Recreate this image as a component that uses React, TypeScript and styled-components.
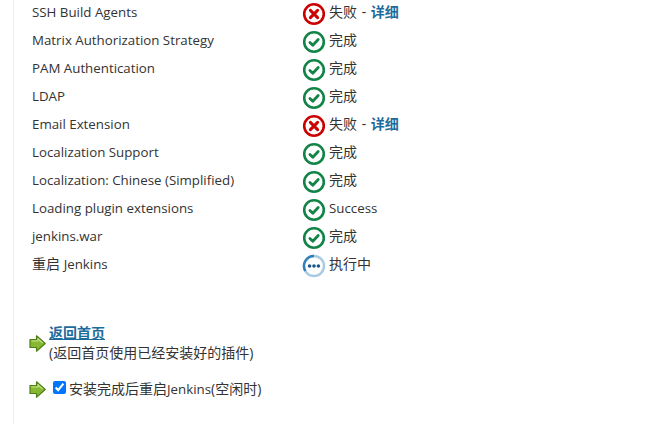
import React from 'react';
import styled, { createGlobalStyle } from 'styled-components';

type Status = 'failed' | 'done' | 'running';

type Job = {
  name: React.ReactNode;
  status: Status;
  label: React.ReactNode;
};

const GlobalStyle = createGlobalStyle`
  html, body {
    margin: 0;
    height: 100%;
    background: #fff;
    overflow: hidden;
  }
  body {
    font-family: 'Open Sans', 'Noto Sans CJK SC', sans-serif;
    font-size: 14px;
    color: #333;
  }
`;

const Page = styled.div`
  width: 664px;
  height: 426px;
  overflow: hidden;
  box-sizing: border-box;
  padding-left: 13px;
`;

const Main = styled.main`
  height: 100%;
  box-sizing: border-box;
  border-left: 1px solid #efefef;
  padding-left: 15px;
`;

const JobList = styled.div`
  margin-top: -2px;
  margin-bottom: 45px;
`;

const JobRow = styled.div`
  display: grid;
  grid-template-columns: 270px 1fr;
  align-items: center;
  height: 28px;
  padding-left: 3px;
  line-height: 20px;
`;

const Latin = styled.span`
  font-size: 13.3px;
`;

const JobStatus = styled.span`
  display: flex;
  align-items: center;
  gap: 3px;
`;

const StatusText = styled.span`
  word-spacing: 1px;
`;

const StatusIcon = styled.svg`
  flex: none;
  width: 24px;
  height: 24px;
  margin-top: 4px;
`;

const Detail = styled.b`
  color: #1f6b9c;
`;

const Action = styled.div<{ $gap: number }>`
  display: flex;
  align-items: center;
  margin-bottom: ${(props) => props.$gap}px;
`;

const ActionText = styled.div`
  margin-left: 3px;
  line-height: 20px;
`;

const HomeLink = styled.a`
  font-weight: 700;
  color: #1f6b9c;
  text-decoration: underline;
  display: block;
`;

const RestartLabel = styled.label`
  display: flex;
  align-items: center;
  margin-left: 7px;
  gap: 3px;
  line-height: 20px;
`;

const RestartBox = styled.input`
  width: 13px;
  height: 13px;
  margin: -3px 0 0;
  accent-color: #0075ff;
`;

const ArrowSvg = styled.svg`
  flex: none;
  width: 17px;
  height: 17px;
`;

function FailedIcon() {
  return (
    <StatusIcon viewBox="0 0 24 24">
      <circle cx="12" cy="12" r="9.8" fill="#fff" stroke="#cc0000" strokeWidth="2.6" />
      <path d="M8.4 8.4 L15.6 15.6 M15.6 8.4 L8.4 15.6" stroke="#cc0000" strokeWidth="3" strokeLinecap="round" />
    </StatusIcon>
  );
}

function DoneIcon() {
  return (
    <StatusIcon viewBox="0 0 24 24">
      <circle cx="12" cy="12" r="9.8" fill="#fff" stroke="#138347" strokeWidth="2.6" />
      <path d="M7.9 12.4 L10.8 15.2 L16.2 9.5" fill="none" stroke="#138347" strokeWidth="2.8" strokeLinecap="round" strokeLinejoin="round" />
    </StatusIcon>
  );
}

function RunningIcon() {
  return (
    <StatusIcon viewBox="0 0 24 24">
      <circle cx="12" cy="12" r="10" fill="#fff" stroke="#a9cbe2" strokeWidth="2.4" />
      <path d="M3.3 17 A10 10 0 0 1 12 2" fill="none" stroke="#2f7fb8" strokeWidth="2.4" />
      <circle cx="7.6" cy="12" r="1.8" fill="#1a5688" />
      <circle cx="12" cy="12" r="1.8" fill="#1a5688" />
      <circle cx="16.4" cy="12" r="1.8" fill="#1a5688" />
    </StatusIcon>
  );
}

function ArrowIcon() {
  return (
    <ArrowSvg viewBox="0 0 17 17">
      <path d="M1 4.5 H7.5 V0.8 L16.2 8.5 L7.5 16.2 V12.5 H1 Z" fill="#86b832" stroke="#4f7d16" strokeWidth="1.2" strokeLinejoin="round" />
      <path d="M2.4 6 H9 V3.8 L13.6 8" fill="none" stroke="#c5e08a" strokeWidth="1.1" />
    </ArrowSvg>
  );
}

const icons: Record<Status, React.ReactNode> = {
  failed: <FailedIcon />,
  done: <DoneIcon />,
  running: <RunningIcon />,
};

const jobs: Job[] = [
  { name: <Latin>SSH Build Agents</Latin>, status: 'failed', label: '失败' },
  { name: <Latin>Matrix Authorization Strategy</Latin>, status: 'done', label: '完成' },
  { name: <Latin>PAM Authentication</Latin>, status: 'done', label: '完成' },
  { name: <Latin>LDAP</Latin>, status: 'done', label: '完成' },
  { name: <Latin>Email Extension</Latin>, status: 'failed', label: '失败' },
  { name: <Latin>Localization Support</Latin>, status: 'done', label: '完成' },
  { name: <Latin>Localization: Chinese (Simplified)</Latin>, status: 'done', label: '完成' },
  { name: <Latin>Loading plugin extensions</Latin>, status: 'done', label: <Latin>Success</Latin> },
  { name: <Latin>jenkins.war</Latin>, status: 'done', label: '完成' },
  { name: <>重启 <Latin>Jenkins</Latin></>, status: 'running', label: '执行中' },
];

export default function App() {
  return (
    <Page>
      <GlobalStyle />
      <Main>
        <JobList>
          {jobs.map((job, i) => (
            <JobRow key={i}>
              <span>{job.name}</span>
              <JobStatus>
                {icons[job.status]}
                <StatusText>
                  {job.label}
                  {job.status === 'failed' && (
                    <>
                      {' - '}
                      <Detail>详细</Detail>
                    </>
                  )}
                </StatusText>
              </JobStatus>
            </JobRow>
          ))}
        </JobList>
        <Action $gap={16}>
          <ArrowIcon />
          <ActionText>
            <HomeLink href="#">返回首页</HomeLink>
            (返回首页使用已经安装好的插件)
          </ActionText>
        </Action>
        <Action $gap={0}>
          <ArrowIcon />
          <RestartLabel>
            <RestartBox type="checkbox" defaultChecked />
            <span>
              安装完成后重启<Latin>Jenkins</Latin>(空闲时)
            </span>
          </RestartLabel>
        </Action>
      </Main>
    </Page>
  );
}
